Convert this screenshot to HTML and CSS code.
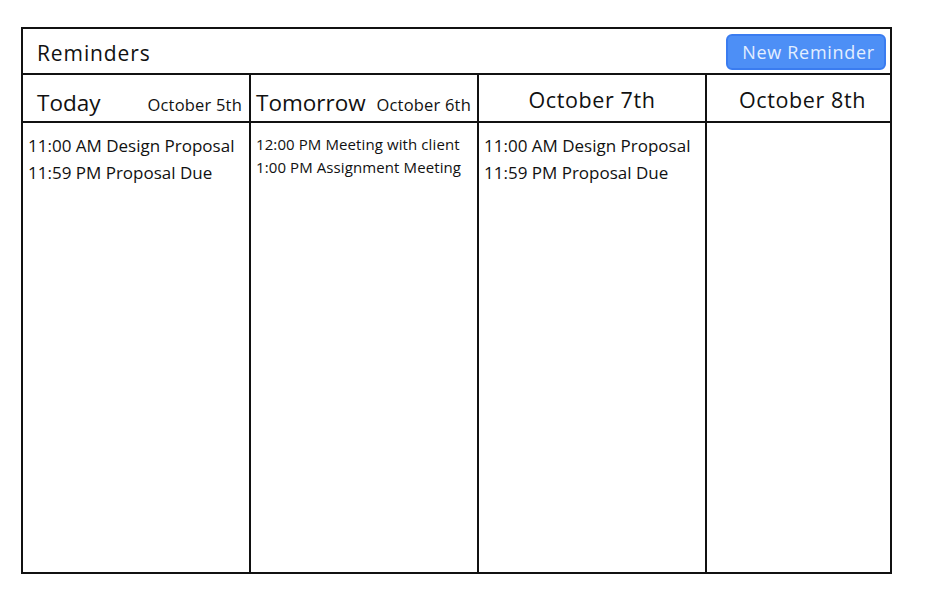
FILE: index.html
```html
<!DOCTYPE html>
<html>
<head>
<meta charset="utf-8">
<link rel="stylesheet" href="styles.css">
</head>
<body>
<div class="board">
  <div class="topbar">
    <div class="title">Reminders</div>
    <button class="new-btn">New Reminder</button>
  </div>
  <div class="grid">
    <div class="col">
      <div class="col-head split"><span class="big">Today</span><span class="small">October 5th</span></div>
      <div class="items">
        <div>11:00 AM Design Proposal</div>
        <div>11:59 PM Proposal Due</div>
      </div>
    </div>
    <div class="col">
      <div class="col-head split tight"><span class="big">Tomorrow</span><span class="small">October 6th</span></div>
      <div class="items compact">
        <div>12:00 PM Meeting with client</div>
        <div>1:00 PM Assignment Meeting</div>
      </div>
    </div>
    <div class="col">
      <div class="col-head center"><span class="mid">October 7th</span></div>
      <div class="items">
        <div>11:00 AM Design Proposal</div>
        <div>11:59 PM Proposal Due</div>
      </div>
    </div>
    <div class="col last">
      <div class="col-head center shifted"><span class="mid">October 8th</span></div>
      <div class="items"></div>
    </div>
  </div>
</div>
</body>
</html>
```
FILE: styles.css
```css
html, body {
  margin: 0;
  padding: 0;
  background: #fff;
}
body {
  font-family: "Open Sans", "Noto Sans", sans-serif;
  color: #111;
  padding: 27px 0 0 21px;
}
.board {
  width: 871px;
  height: 547px;
  box-sizing: border-box;
  border: 2px solid #111;
  display: flex;
  flex-direction: column;
}
.topbar {
  height: 46px;
  box-sizing: border-box;
  border-bottom: 2px solid #111;
  display: flex;
  align-items: center;
  justify-content: space-between;
  padding: 0 4px 0 14px;
}
.title {
  font-size: 21px;
  letter-spacing: 0.9px;
  padding-top: 3px;
}
.new-btn {
  font-family: inherit;
  font-size: 18px;
  letter-spacing: 0.7px;
  color: #e3eeff;
  background: #4d8ff6;
  border: 2px solid #3a7cf0;
  border-radius: 6px;
  width: 160px;
  height: 36px;
  padding: 0 0 0 5px;
  margin-top: 1px;
}
.grid {
  flex: 1;
  display: grid;
  grid-template-columns: 228px 228px 228px 1fr;
}
.col {
  border-right: 2px solid #111;
  display: flex;
  flex-direction: column;
}
.col.last {
  border-right: none;
}
.col-head {
  height: 48px;
  box-sizing: border-box;
  border-bottom: 2px solid #111;
  display: flex;
  align-items: baseline;
}
.col-head.split {
  justify-content: space-between;
  padding: 12px 7px 0 14px;
}
.col-head.split.tight {
  padding: 12px 6px 0 5px;
}
.col-head.center {
  justify-content: center;
  padding-top: 10px;
}
.col-head.center.shifted {
  padding-left: 8px;
}
.big {
  font-size: 22.5px;
}
.small {
  font-size: 16.5px;
  letter-spacing: 0.2px;
}
.mid {
  font-size: 21.5px;
  letter-spacing: 0.6px;
}
.items {
  padding: 9px 5px 0 5px;
  font-size: 17px;
  line-height: 27px;
}
.items.compact {
  font-size: 15px;
  letter-spacing: 0.1px;
  line-height: 23px;
  padding-top: 10px;
}
```
